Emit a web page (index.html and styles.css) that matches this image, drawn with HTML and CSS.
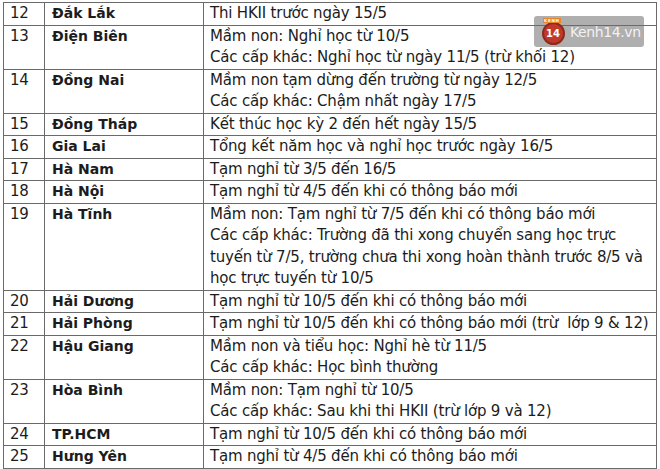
FILE: index.html
```html
<!DOCTYPE html>
<html lang="vi">
<head>
<meta charset="utf-8">
<link rel="stylesheet" href="styles.css">
</head>
<body>
<div class="page">
<table class="grid">
<colgroup><col class="c-no"><col class="c-name"><col class="c-info"></colgroup>
<tr><td>12</td><td class="name">Đắk Lắk</td><td>Thi HKII trước ngày 15/5</td></tr>
<tr><td>13</td><td class="name">Điện Biên</td><td>Mầm non: Nghỉ học từ 10/5<br>Các cấp khác: Nghỉ học từ ngày 11/5 (trừ khối 12)</td></tr>
<tr><td>14</td><td class="name">Đồng Nai</td><td>Mầm non tạm dừng đến trường từ ngày 12/5<br>Các cấp khác: Chậm nhất ngày 17/5</td></tr>
<tr><td>15</td><td class="name">Đồng Tháp</td><td>Kết thúc học kỳ 2 đến hết ngày 15/5</td></tr>
<tr><td>16</td><td class="name">Gia Lai</td><td>Tổng kết năm học và nghỉ học trước ngày 16/5</td></tr>
<tr><td>17</td><td class="name">Hà Nam</td><td>Tạm nghỉ từ 3/5 đến 16/5</td></tr>
<tr><td>18</td><td class="name">Hà Nội</td><td>Tạm nghỉ từ 4/5 đến khi có thông báo mới</td></tr>
<tr><td>19</td><td class="name">Hà Tĩnh</td><td>Mầm non: Tạm nghỉ từ 7/5 đến khi có thông báo mới<br>Các cấp khác: Trường đã thi xong chuyển sang học trực<br>tuyến từ 7/5, trường chưa thi xong hoàn thành trước 8/5 và<br>học trực tuyến từ 10/5</td></tr>
<tr><td>20</td><td class="name">Hải Dương</td><td>Tạm nghỉ từ 10/5 đến khi có thông báo mới</td></tr>
<tr><td>21</td><td class="name">Hải Phòng</td><td>Tạm nghỉ từ 10/5 đến khi có thông báo mới (trừ&nbsp; lớp 9 &amp; 12)</td></tr>
<tr><td>22</td><td class="name">Hậu Giang</td><td>Mầm non và tiểu học: Nghỉ hè từ 11/5<br>Các cấp khác: Học bình thường</td></tr>
<tr><td>23</td><td class="name">Hòa Bình</td><td>Mầm non: Tạm nghỉ từ 10/5<br>Các cấp khác: Sau khi thi HKII (trừ lớp 9 và 12)</td></tr>
<tr><td>24</td><td class="name">TP.HCM</td><td>Tạm nghỉ từ 10/5 đến khi có thông báo mới</td></tr>
<tr><td>25</td><td class="name">Hưng Yên</td><td>Tạm nghỉ từ 4/5 đến khi có thông báo mới</td></tr>
</table>
<div class="mark">
  <div class="mark-logo">
    <span class="mark-kenh">KENH</span>
    <span class="mark-circle">14</span>
  </div>
  <span class="mark-text">Kenh14.vn</span>
</div>
</div>
</body>
</html>
```
FILE: styles.css
```css
html, body {
  margin: 0;
  padding: 0;
  background: #ffffff;
}
.page {
  position: relative;
  width: 660px;
  height: 469px;
  overflow: hidden;
  padding: 2px 0 0 3px;
  box-sizing: border-box;
}
.grid {
  border-collapse: collapse;
  table-layout: fixed;
  width: 653px;
  font-family: "DejaVu Sans", sans-serif;
  font-size: 15px;
  color: #1c1c1c;
}
.c-no { width: 41px; }
.c-name { width: 159px; }
.c-info { width: 453px; }
.grid td {
  border: 1px solid #6a6a6a;
  padding: 0 0 0 6px;
  line-height: 21.5px;
  vertical-align: top;
  white-space: nowrap;
  letter-spacing: -0.2px;
}
.grid td.name {
  font-weight: bold;
  font-size: 14px;
  padding-left: 7px;
  letter-spacing: 0;
}
.mark {
  position: absolute;
  left: 534px;
  top: 16px;
  width: 110px;
  height: 31px;
  border-radius: 3px;
  background: rgba(110, 110, 110, 0.55);
  display: flex;
  align-items: center;
  gap: 5px;
  padding-left: 7px;
  box-sizing: border-box;
}
.mark-logo {
  position: relative;
  width: 24px;
  height: 28px;
  display: flex;
  align-items: flex-end;
  justify-content: center;
}
.mark-kenh {
  position: absolute;
  top: 0;
  left: 2px;
  font-family: "DejaVu Sans", sans-serif;
  font-size: 4px;
  font-weight: bold;
  color: #ffffff;
  background: #e8862b;
  letter-spacing: 0.8px;
  line-height: 5px;
  padding: 0 1px;
}
.mark-circle {
  width: 19px;
  height: 19px;
  border-radius: 50%;
  background: #c0392b;
  border: 2px solid #8e2a1c;
  color: #ffffff;
  font-family: "DejaVu Sans", sans-serif;
  font-weight: bold;
  font-size: 10px;
  line-height: 19px;
  text-align: center;
  margin-bottom: 1px;
}
.mark-text {
  font-family: "DejaVu Sans", sans-serif;
  font-size: 14px;
  color: rgba(255, 255, 255, 0.85);
  letter-spacing: -0.4px;
}
```
